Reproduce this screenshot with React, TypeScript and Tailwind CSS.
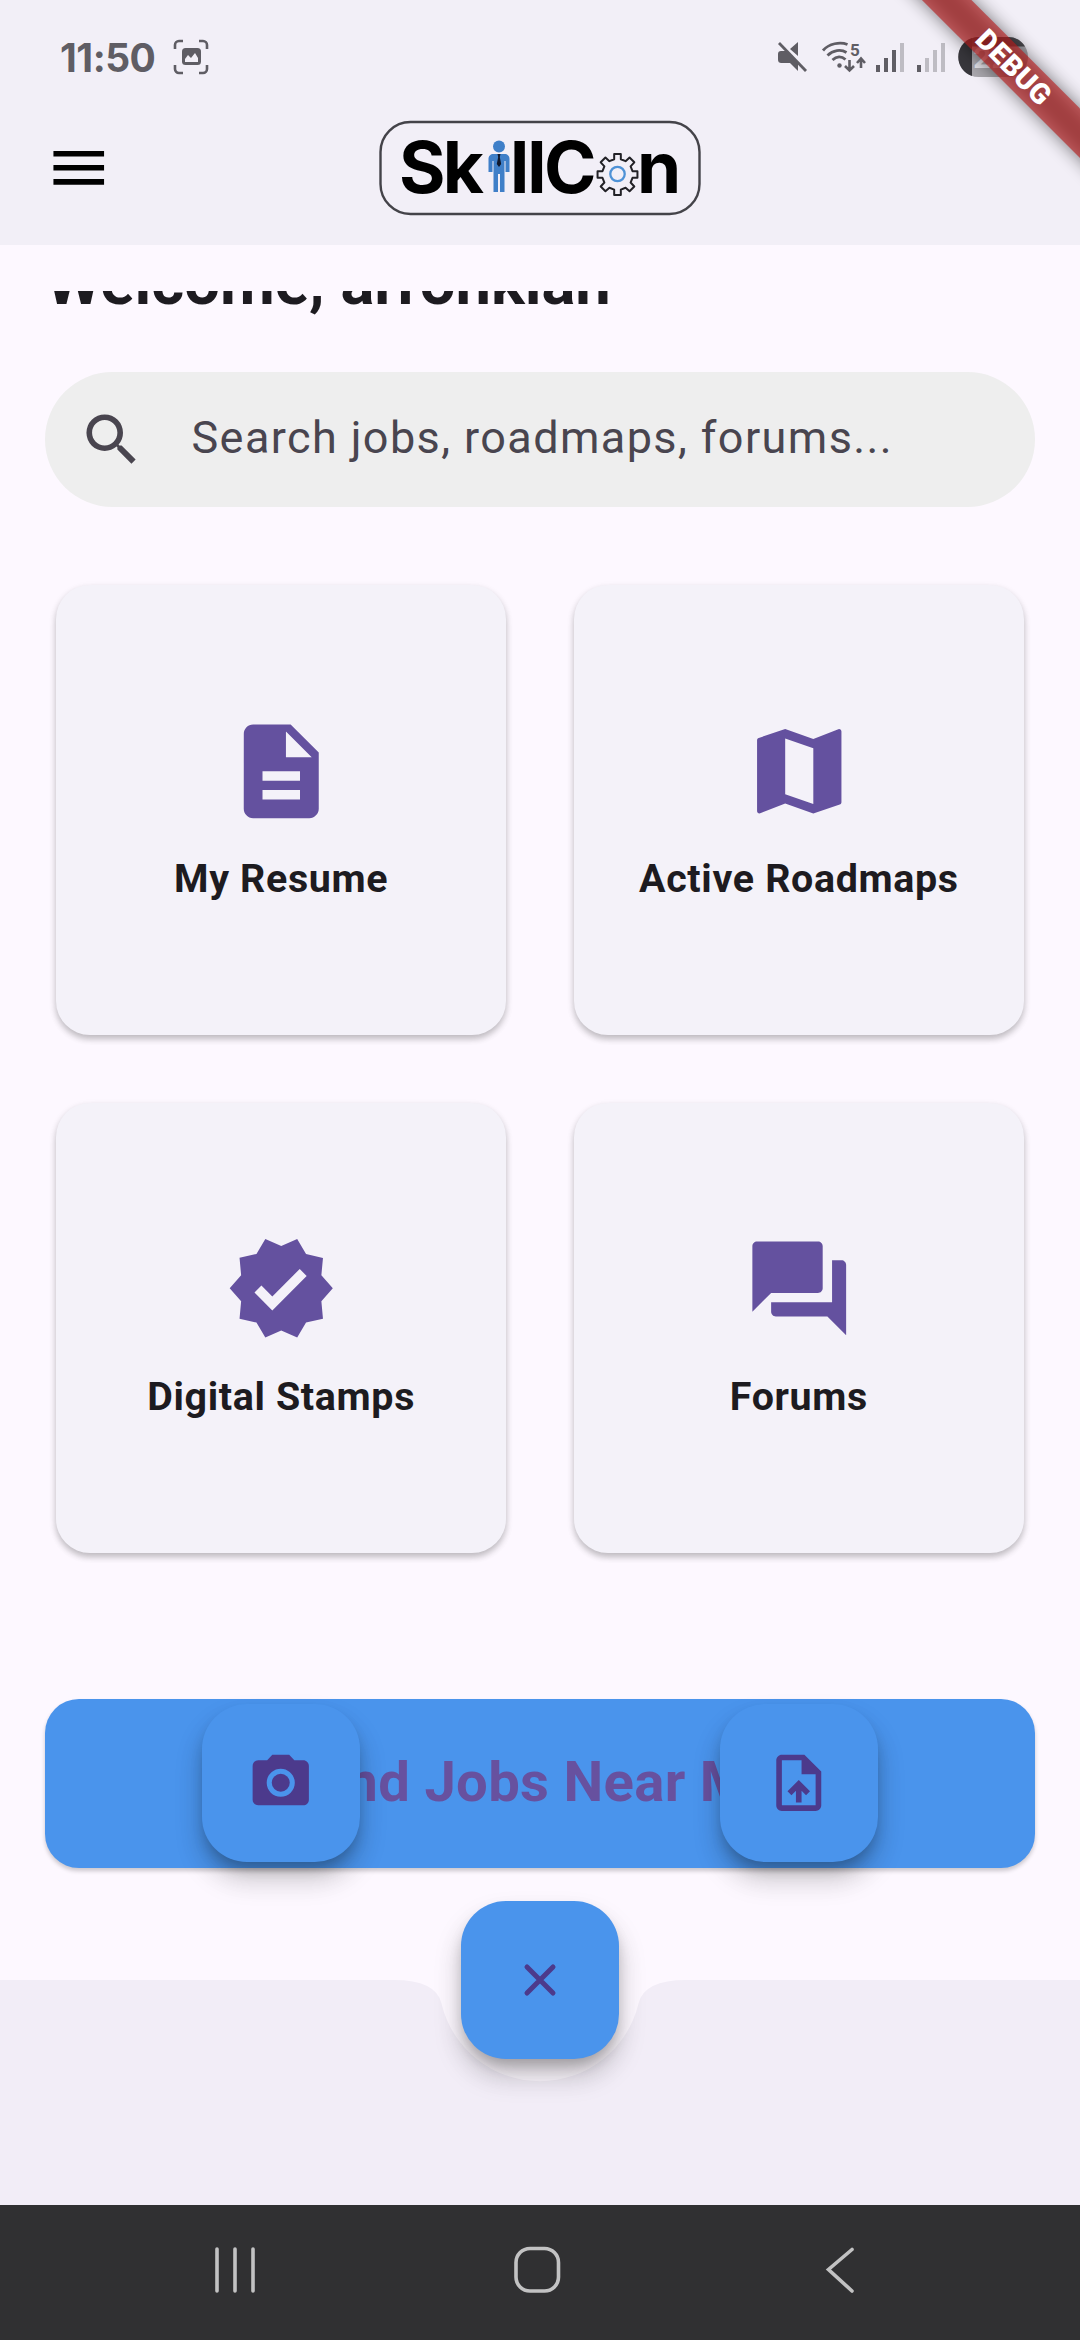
import type { ReactNode } from "react";
import type { IconType } from "react-icons";
import {
  MdCameraAlt,
  MdDescription,
  MdForum,
  MdMap,
  MdMenu,
  MdSearch,
  MdUploadFile,
  MdVerified,
} from "react-icons/md";

const tiles: { label: string; icon: IconType }[] = [
  { label: "My Resume", icon: MdDescription },
  { label: "Active Roadmaps", icon: MdMap },
  { label: "Digital Stamps", icon: MdVerified },
  { label: "Forums", icon: MdForum },
];

function StatusBar() {
  return (
    <div className="flex h-[114px] items-center pl-[60px] text-[#5f5d64]">
      <span className="font-[Inter] text-[39px] leading-none font-bold tracking-[-0.5px]">
        11:50
      </span>
      {/* Screenshot saved */}
      <svg className="ml-[18px]" width="36" height="36" viewBox="0 0 36 36" fill="none">
        <path
          d="M2 10V6a4 4 0 0 1 4-4h4M26 2h4a4 4 0 0 1 4 4v4M34 26v4a4 4 0 0 1-4 4h-4M10 34H6a4 4 0 0 1-4-4v-4"
          stroke="currentColor"
          strokeWidth="2.6"
        />
        <rect x="9" y="9" width="19" height="17" rx="3.5" fill="currentColor" />
        <path d="M12 23v-3l3-4 3 3 4-5 3 5v4z" fill="#f2eff7" />
      </svg>

      <div className="ml-auto flex items-center">
        {/* Muted */}
        <svg width="32" height="32" viewBox="0 0 32 32" className="shrink-0">
          <path d="M2 13c0-2 1-3 3-3h5l12 12v8l-8-8H6c-3 0-4-1-4-4zM14 8l8-7v14z" fill="currentColor" />
          <path d="M3 2l27 28" stroke="currentColor" strokeWidth="2.8" />
        </svg>
        {/* Wi-Fi 5 */}
        <svg width="46" height="32" viewBox="0 0 46 32" className="ml-[13px] shrink-0" fill="none">
          <path
            d="M2 9.5C8 2.5 19 .5 26.5 3.5M6.5 14.5C12 9 20 8 25.5 11.500M11.5 19c4-4 9-4 13-.5"
            stroke="currentColor"
            strokeWidth="2.8"
          />
          <circle cx="18.5" cy="24.5" r="2.2" fill="currentColor" />
          <path
            d="M28.5 19v10m-4.5-4 4.5 4.5 4.5-4.5M40 27V18m-4 4 4-4.500 4 4.5"
            stroke="currentColor"
            strokeWidth="2.6"
          />
          <text
            x="29"
            y="14.500"
            fontFamily="Roboto, sans-serif"
            fontWeight="700"
            fontSize="17"
            fill="currentColor"
          >
            5
          </text>
        </svg>
        <Signal bars={3} />
        <Signal bars={1} />
        {/* Battery */}
        <svg width="122" height="42" viewBox="0 0 122 42" className="ml-[9px] shrink-0">
          <path d="M20.500 1H50a20 20 0 0 1 0 40H20.500a20 20 0 0 1 0-40z" fill="#a9a7ad" />
          <path d="M14 2v38A20 20 0 0 1 14 2z" fill="#38373c" />
          <path d="M14 2.200Q17 1 20.500 1H50a20 20 0 0 1 17 9.500H14z" fill="#4a494e" />
          <text
            x="15"
            y="32"
            fontFamily="Inter, sans-serif"
            fontWeight="700"
            fontSize="29"
            fill="#e6e4ea"
          >
            22
          </text>
        </svg>
      </div>
    </div>
  );
}

function Signal({ bars }: { bars: number }) {
  return (
    <div className="ml-[9px] flex h-[29px] w-[32px] shrink-0 items-end gap-[4px]">
      <i className={`h-[7px] w-[4px] ${bars > 0 ? "bg-[#5f5d64]" : "bg-[#bebcc3]"}`} />
      <i className={`h-[14px] w-[4px] ${bars > 1 ? "bg-[#5f5d64]" : "bg-[#bebcc3]"}`} />
      <i className={`h-[22px] w-[4px] ${bars > 2 ? "bg-[#5f5d64]" : "bg-[#bebcc3]"}`} />
      <i className={`h-[29px] w-[4px] ${bars > 3 ? "bg-[#5f5d64]" : "bg-[#bebcc3]"}`} />
    </div>
  );
}

function Logo() {
  return (
    <svg
      width="322"
      height="96"
      viewBox="0 0 322 96"
      fontFamily="Inter, sans-serif"
      fontWeight="700"
      fontSize="71"
    >
      <rect x="1.5" y="2" width="319" height="92" rx="30" fill="none" stroke="#444349" strokeWidth="2.4" />
      <text x="20" y="73" textLength="85" lengthAdjust="spacing">
        Sk
      </text>
      <g fill="#3f7fc8">
        <circle cx="120" cy="26.5" r="6" />
        <path d="M114.500 34h11c3 0 5 2 5 5v13h-4V41h-1v31h-4.500V54h-2v18h-4.500V41h-1v11h-4V39c0-3 2-5 5-5z" />
      </g>
      <path d="M118.500 34h3l-.7 3 1.400 7-2.200 3-2.200-3 1.400-7z" fill="#10182c" />
      <text x="131" y="73" letterSpacing="-2">
        ll
      </text>
      <text x="165" y="73">
        C
      </text>
      {/* Gear standing in for the "o" */}
      <g transform="translate(238.500 54) scale(.95)" fill="none">
        <path
          d="M-3.500-20.500h7v5.500l5 2 4.200-3.800 5 5-3.900 4.300 2 5h5.200v7h-5.200l-2 5 3.900 4.200-5 5-4.200-3.700-5 2v5.500h-7v-5.500l-5-2-4.200 3.700-5-5 3.900-4.200-2-5h-5.200v-7h5.200l2-5-3.900-4.300 5-5 4.200 3.800 5-2z"
          transform="translate(0 -.5)"
          stroke="#222126"
          strokeWidth="2.100"
          strokeLinejoin="round"
        />
        <circle r="7.600" stroke="#4f92d6" strokeWidth="2.400" />
      </g>
      <text x="258" y="73">
        n
      </text>
    </svg>
  );
}

function DebugBanner() {
  return (
    <svg className="absolute top-0 right-0" width="240" height="240" viewBox="0 0 240 240">
      <defs>
        <filter id="bannerShadow" x="-20%" y="-100%" width="140%" height="300%">
          <feGaussianBlur stdDeviation="9" />
        </filter>
      </defs>
      <g transform="translate(173.500 67.500) rotate(45)">
        <rect x="-200" y="-18" width="400" height="35" fill="#000" opacity=".5" filter="url(#bannerShadow)" />
        <rect x="-200" y="-18" width="400" height="35" fill="#b71c1c" opacity=".63" />
        <text
          y="9.500"
          textAnchor="middle"
          fontFamily="Roboto, sans-serif"
          fontWeight="900"
          fontSize="28.7"
          letterSpacing=".3"
          fill="#fff"
        >
          DEBUG
        </text>
      </g>
    </svg>
  );
}

function Fab({ className, children }: { className: string; children: ReactNode }) {
  return (
    <button
      className={`absolute flex size-[158px] items-center justify-center rounded-[45px] bg-[#4a94ec] text-[#4c3a8c] shadow-[0_9px_14px_-3px_rgba(0,0,0,0.22),0_17px_28px_rgba(0,0,0,0.17),0_16px_30px_rgba(0,0,0,0.06)] ${className}`}
    >
      {children}
    </button>
  );
}

function BottomBar() {
  return (
    <div className="absolute bottom-0 left-0 h-[225px] w-full">
      {/* Bar with the rounded notch the centre button sits in */}
      <svg width="1080" height="225" viewBox="0 0 1080 225">
        <path
          d="M0 0H393.750Q435.900 0 441.500 23.400A101.250 101.250 0 0 0 638.500 23.400Q644.100 0 686.250 0H1080V225H0z"
          fill="#f2edf7"
        />
      </svg>
    </div>
  );
}

function SystemNav() {
  return (
    <nav className="h-[135px] bg-[#303032]">
      <svg
        width="1080"
        height="135"
        viewBox="0 0 1080 135"
        fill="none"
        stroke="#c2c2c3"
        strokeWidth="3.6"
      >
        <path d="M217 44v42M235 44v42M253 44v42" strokeLinecap="round" />
        <rect x="516" y="43.500" width="42.500" height="42.500" rx="14" />
        <path d="M852 44.500 828.500 64.500 852 86" strokeLinecap="round" />
      </svg>
    </nav>
  );
}

export default function App() {
  return (
    <div className="relative flex h-[2340px] w-[1080px] flex-col overflow-hidden bg-[#fdf8ff] font-[Roboto,sans-serif] text-[#1d1b20]">
      <header className="h-[245px] shrink-0 bg-[#f2eff7]">
        <StatusBar />
        <div className="grid h-[108px] grid-cols-[1fr_auto_1fr] items-center">
          <MdMenu className="ml-[45px] size-[67.5px] text-black" />
          <Logo />
        </div>
      </header>

      <main className="relative flex-1 px-[45px] pt-[46px]">
        {/* Greeting is scrolled halfway under the top edge */}
        <div className="flex h-[81px] items-start overflow-hidden">
          <h1 className="-mt-[46px] ml-px text-[63.3px] leading-[75px] font-bold whitespace-nowrap">
            Welcome, arronkian
          </h1>
        </div>

        <div className="flex h-[135px] items-center rounded-full bg-[#eeeeee] pl-[33px] text-[#49454f]">
          <MdSearch className="size-[67.5px]" />
          <span className="-mt-[3px] ml-[46px] text-[45px] tracking-[1.4px]">
            Search jobs, roadmaps, forums...
          </span>
        </div>

        <div className="mx-[11px] mt-[78px] grid grid-cols-2 gap-[67.5px]">
          {tiles.map(({ label, icon: Icon }) => (
            <div
              key={label}
              className="flex h-[450px] flex-col items-center justify-center gap-[22px] rounded-[34px] bg-[#f4f2f9] shadow-[0_4px_6px_rgba(0,0,0,0.2),0_3px_9px_rgba(0,0,0,0.08)]"
            >
              <Icon className="size-[112.5px] text-[#64519f]" />
              <span className="relative top-[2px] text-[39.4px] leading-[56px] font-bold tracking-[0.65px]">
                {label}
              </span>
            </div>
          ))}
        </div>

        <button className="mt-[146px] flex h-[169px] w-full items-center justify-center rounded-[34px] bg-[#4a94ec] pb-[2px] text-[56.25px] font-bold tracking-[0.3px] text-[#67519f] shadow-[0_3px_4px_rgba(0,0,0,0.2)]">
          Find Jobs Near Me
        </button>

        <BottomBar />
        <Fab className="top-[1459px] left-[202px]">
          <MdCameraAlt className="size-[67.5px]" />
        </Fab>
        <Fab className="top-[1459px] left-[720px]">
          <MdUploadFile className="size-[67.5px]" />
        </Fab>
        <Fab className="top-[1656px] left-[461px]">
          <svg width="34" height="34" viewBox="0 0 34 34">
            <path d="M4 4l26 26M30 4 4 30" stroke="currentColor" strokeWidth="5" strokeLinecap="round" />
          </svg>
        </Fab>
      </main>

      <SystemNav />
      <DebugBanner />
    </div>
  );
}
